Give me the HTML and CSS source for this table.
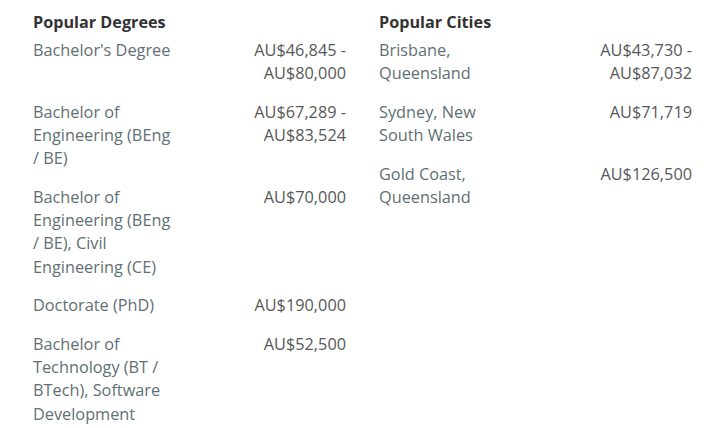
FILE: index.html
```html
<!DOCTYPE html>
<html>
<head>
<meta charset="utf-8">
<link rel="stylesheet" href="styles.css">
</head>
<body>
<div class="page">
  <section class="col">
    <h2 class="title">Popular Degrees</h2>
    <div class="rows degrees">
      <div class="row"><div class="name">Bachelor's Degree</div><div class="pay">AU$46,845 -<br>AU$80,000</div></div>
      <div class="row"><div class="name">Bachelor of Engineering (BEng / BE)</div><div class="pay">AU$67,289 -<br>AU$83,524</div></div>
      <div class="row"><div class="name">Bachelor of Engineering (BEng / BE), Civil Engineering (CE)</div><div class="pay">AU$70,000</div></div>
      <div class="row"><div class="name">Doctorate (PhD)</div><div class="pay">AU$190,000</div></div>
      <div class="row"><div class="name">Bachelor of Technology (BT / BTech), Software Development</div><div class="pay">AU$52,500</div></div>
    </div>
  </section>
  <section class="col">
    <h2 class="title">Popular Cities</h2>
    <div class="rows cities">
      <div class="row"><div class="name">Brisbane, Queensland</div><div class="pay">AU$43,730 -<br>AU$87,032</div></div>
      <div class="row"><div class="name">Sydney, New South Wales</div><div class="pay">AU$71,719</div></div>
      <div class="row"><div class="name">Gold Coast, Queensland</div><div class="pay">AU$126,500</div></div>
    </div>
  </section>
</div>
</body>
</html>
```
FILE: styles.css
```css
html, body {
  margin: 0;
  padding: 0;
  background: #ffffff;
}
body {
  font-family: "Open Sans", "Liberation Sans", sans-serif;
  font-size: 16.3px;
  line-height: 23.2px;
}
.page {
  display: grid;
  grid-template-columns: 313px 313px;
  column-gap: 33px;
  padding: 11px 0 0 33px;
}
.title {
  margin: 0 0 5px 0;
  font-size: 16.2px;
  font-weight: 700;
  color: #333333;
  line-height: 23px;
}
.rows {
  display: flex;
  flex-direction: column;
  gap: 15.5px;
}
.row {
  display: flex;
  justify-content: space-between;
  align-items: flex-start;
}
.name {
  color: #5f6f73;
}
.degrees .name { width: 145px; }
.cities .name { width: 115px; }
.pay {
  color: #585858;
  text-align: right;
}
```
